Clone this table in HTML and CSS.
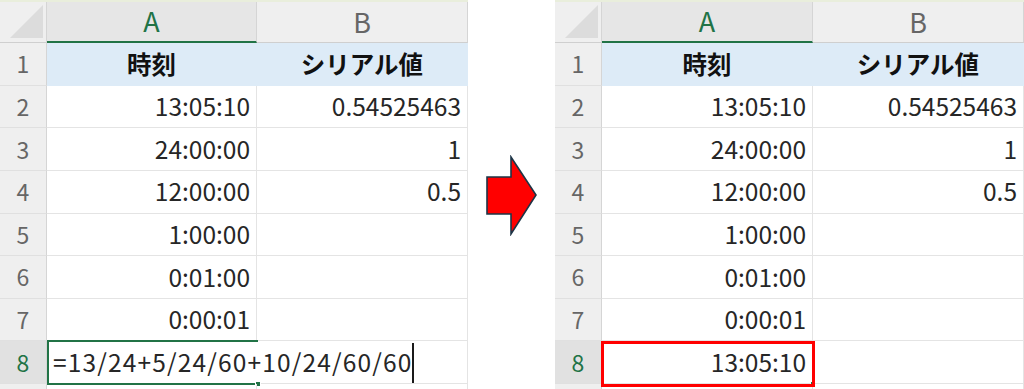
FILE: index.html
```html
<!DOCTYPE html>
<html lang="ja">
<head>
<meta charset="utf-8">
<link rel="stylesheet" href="styles.css">
</head>
<body>
<div class="page">
  <div class="sheet">
    <div class="ch corner"><span class="tri"></span></div>
    <div class="ch sel">A</div>
    <div class="ch">B</div>

    <div class="rh">1</div><div class="c head">時刻</div><div class="c head">シリアル値</div>
    <div class="rh">2</div><div class="c">13:05:10</div><div class="c">0.54525463</div>
    <div class="rh">3</div><div class="c">24:00:00</div><div class="c">1</div>
    <div class="rh">4</div><div class="c">12:00:00</div><div class="c">0.5</div>
    <div class="rh">5</div><div class="c">1:00:00</div><div class="c"></div>
    <div class="rh">6</div><div class="c">0:01:00</div><div class="c"></div>
    <div class="rh">7</div><div class="c">0:00:01</div><div class="c"></div>
    <div class="rh selrow">8</div><div class="c editing"><span class="formula">=13/24+5/24/60+10/24/60/60<span class="caret"></span></span><span class="selbox"><span class="handle"></span></span></div>
    <div class="rh tail"></div><div class="c tail"></div><div class="c tail"></div>
  </div>

  <div class="gap">
    <svg class="arrow" width="53" height="81" viewBox="0 0 53 81">
      <polygon points="2,22 26,22 26,2 51,40 26,79 26,59 2,59" fill="#ff0000" stroke="#1d3446" stroke-width="1.6" stroke-linejoin="miter"/>
    </svg>
  </div>

  <div class="sheet right">
    <div class="ch corner"><span class="tri"></span></div>
    <div class="ch sel">A</div>
    <div class="ch">B</div>

    <div class="rh">1</div><div class="c head">時刻</div><div class="c head">シリアル値</div>
    <div class="rh">2</div><div class="c">13:05:10</div><div class="c">0.54525463</div>
    <div class="rh">3</div><div class="c">24:00:00</div><div class="c">1</div>
    <div class="rh">4</div><div class="c">12:00:00</div><div class="c">0.5</div>
    <div class="rh">5</div><div class="c">1:00:00</div><div class="c"></div>
    <div class="rh">6</div><div class="c">0:01:00</div><div class="c"></div>
    <div class="rh">7</div><div class="c">0:00:01</div><div class="c"></div>
    <div class="rh selrow">8</div><div class="c result">13:05:10<span class="handle small"></span><span class="redbox"></span></div><div class="c"></div>
    <div class="rh tail"></div><div class="c tail"></div><div class="c tail"></div>
  </div>
</div>
</body>
</html>
```

FILE: styles.css
```css
* { box-sizing: border-box; }
html, body {
  margin: 0;
  padding: 0;
  background: #ffffff;
}
body {
  width: 1024px;
  height: 389px;
  overflow: hidden;
  font-family: "Noto Sans CJK JP", "Noto Sans", sans-serif;
  color: #262626;
}
.page {
  display: flex;
  height: 389px;
}
.sheet {
  position: relative;
  width: 468px;
  height: 389px;
  display: grid;
  grid-template-columns: 47px 210px 211px;
  grid-template-rows: 41px repeat(8, 42.625px) 1fr;
  border-top: 2px solid #e9eedc;
  overflow: hidden;
}
.sheet.right {
  width: 469px;
  grid-template-columns: 47px 211px 211px;
}
.gap {
  flex: 1;
  display: flex;
  align-items: center;
  justify-content: center;
  padding-top: 1px;
}
.ch {
  background: #efefef;
  border-right: 1px solid #d5d5d5;
  border-bottom: 1px solid #cfcfcf;
  display: flex;
  align-items: center;
  justify-content: center;
  font-size: 27px;
  color: #666666;
  line-height: 1;
  padding-bottom: 2px;
}
.ch.sel {
  color: #217346;
  background: #e6e6e6;
  border-bottom: 2px solid #217346;
}
.ch.corner {
  position: relative;
  background: #efefef;
}
.tri {
  position: absolute;
  left: 10px;
  top: 3px;
  width: 0;
  height: 0;
  border-left: 33px solid transparent;
  border-bottom: 33px solid #dcdcdc;
}
.rh {
  background: #efefef;
  border-right: 1px solid #d5d5d5;
  border-bottom: 1px solid #e0e0e0;
  display: flex;
  align-items: center;
  justify-content: center;
  font-size: 23px;
  color: #666666;
  line-height: 1;
}
.rh.selrow {
  background: #e1e1e1;
  color: #217346;
}
.c {
  position: relative;
  border-right: 1px solid #e4e4e4;
  border-bottom: 1px solid #e4e4e4;
  display: flex;
  align-items: center;
  justify-content: flex-end;
  padding-right: 6px;
  font-size: 24.5px;
  line-height: 1;
  white-space: nowrap;
}
.c.head {
  background: #ddebf7;
  justify-content: center;
  padding-right: 0;
  font-weight: 700;
  color: #111111;
  border-right-color: #ddebf7;
  border-bottom-color: #ddebf7;
}
.c.tail, .rh.tail {
  border-bottom: none;
}
.c.editing {
  grid-column: span 2;
  justify-content: flex-start;
  padding-left: 6px;
  padding-right: 0;
}
.formula {
  display: inline-flex;
  align-items: center;
  letter-spacing: 1.15px;
  margin-top: 1px;
}
.caret {
  display: inline-block;
  width: 1.5px;
  height: 40px;
  background: #1a1a1a;
  margin-left: 0;
}
.selbox {
  position: absolute;
  left: 0;
  top: -1px;
  width: 211px;
  bottom: -2px;
  border-top: 2px solid #217346;
  border-left: 2px solid #217346;
  border-bottom: 2px solid #217346;
  pointer-events: none;
}
.handle {
  position: absolute;
  right: -3px;
  bottom: -4px;
  width: 6px;
  height: 6px;
  background: #217346;
  border: 1px solid #ffffff;
}
.handle.small {
  right: -2px;
  bottom: -2px;
  width: 4px;
  height: 4px;
}
.redbox {
  position: absolute;
  left: -1px;
  top: 0;
  right: -3px;
  bottom: -4px;
  border: 3px solid #ff0000;
  pointer-events: none;
  z-index: 3;
}
.arrow {
  display: block;
}
```
